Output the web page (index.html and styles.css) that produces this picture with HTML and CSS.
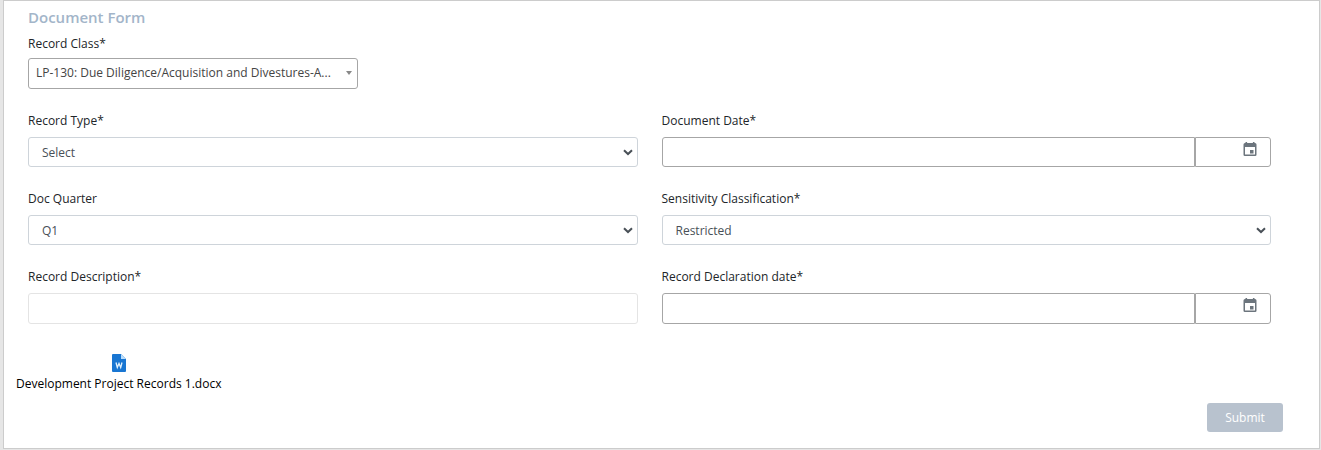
FILE: index.html
```html
<!DOCTYPE html>
<html lang="en">
<head>
<meta charset="utf-8">
<meta name="viewport" content="width=device-width, initial-scale=1">
<title>Document Form</title>
<link rel="stylesheet" href="styles.css">
</head>
<body>
<svg width="0" height="0" class="sprite" aria-hidden="true">
  <symbol id="chevron" viewBox="0 0 10 7"><path d="M1 1.2 5 5 9 1.2" fill="none" stroke="#495057" stroke-width="2"/></symbol>
  <symbol id="calendar" viewBox="0 0 14 15"><path fill="#6c757d" fill-rule="evenodd" d="M2.5 0h1.6v1h5.8V0h1.6v1h.5a1.5 1.5 0 0 1 1.5 1.500v10.200a1.300 1.300 0 0 1-1.300 1.300H1.800A1.300 1.300 0 0 1 .5 12.700V2.500A1.500 1.500 0 0 1 2 1h.5zM2 5v7.500h10V5zM7 8h3.500v3.500H7z"/></symbol>
</svg>
<form class="card">
  <h1 class="title">Document Form</h1>
  <div class="field record-class">
    <label for="class">Record Class*</label>
    <div class="picker">
      <select id="class" class="control control-dark"><option>LP-130: Due Diligence/Acquisition and Divestures-A...</option></select>
      <svg class="caret" viewBox="0 0 6 4" aria-hidden="true"><path d="M0 0h6L3 4z" fill="#888"/></svg>
    </div>
  </div>
  <div class="grid">
    <div class="field">
      <label for="type">Record Type*</label>
      <div class="picker">
        <select id="type" class="control control-select"><option>Select</option></select>
        <svg class="chevron" aria-hidden="true"><use href="#chevron"/></svg>
      </div>
    </div>
    <div class="field">
      <label for="date">Document Date*</label>
      <div class="date">
        <input id="date" class="control control-dark" type="text">
        <button type="button" class="date-button" aria-label="Choose document date"><svg class="calendar" aria-hidden="true"><use href="#calendar"/></svg></button>
      </div>
    </div>
    <div class="field">
      <label for="quarter">Doc Quarter</label>
      <div class="picker">
        <select id="quarter" class="control control-select"><option>Q1</option></select>
        <svg class="chevron" aria-hidden="true"><use href="#chevron"/></svg>
      </div>
    </div>
    <div class="field">
      <label for="sensitivity">Sensitivity Classification*</label>
      <div class="picker">
        <select id="sensitivity" class="control control-select"><option>Restricted</option></select>
        <svg class="chevron" aria-hidden="true"><use href="#chevron"/></svg>
      </div>
    </div>
    <div class="field">
      <label for="description">Record Description*</label>
      <input id="description" class="control control-light control-tall" type="text">
    </div>
    <div class="field">
      <label for="declaration">Record Declaration date*</label>
      <div class="date">
        <input id="declaration" class="control control-dark control-tall" type="text">
        <button type="button" class="date-button" aria-label="Choose declaration date"><svg class="calendar" aria-hidden="true"><use href="#calendar"/></svg></button>
      </div>
    </div>
  </div>
  <div class="file">
    <svg class="file-icon" viewBox="0 0 14 18" aria-hidden="true">
      <path d="M1 0h8l5 5v12a1 1 0 0 1-1 1H1a1 1 0 0 1-1-1V1a1 1 0 0 1 1-1z" fill="#1976d2"/>
      <path d="M9 0l5 5H9z" fill="#bbdefb"/>
      <path d="M4 8.500l1.300 5L7 9.500l1.700 4 1.300-5" fill="none" stroke="#e3f2fd" stroke-width="1.300"/>
    </svg>
    <span>Development Project Records 1.docx</span>
  </div>
  <div class="actions"><button type="submit" class="submit">Submit</button></div>
</form>
</body>
</html>
```
FILE: styles.css
```css
* { box-sizing: border-box; }
body {
  margin: 0;
  padding: 0 1px 1px 3px;
  background: #e6e6e6;
  color: #212529;
  font: 12px/20px "Open Sans", "Noto Sans", sans-serif;
}
.sprite { display: none; }
.card {
  margin: 0;
  padding: 6px 48px 16px 24px;
  background: #fff;
  border: 1px solid #ccc;
}
.title {
  margin: 0;
  color: #a3b5c9;
  font-size: 15px;
  line-height: 20px;
  font-weight: 600;
}
.field { display: flex; flex-direction: column; gap: 6px; min-width: 0; }
.record-class { gap: 4px; margin-top: 7px; width: 330px; }
.grid {
  display: grid;
  grid-template-columns: repeat(2, minmax(0, 1fr));
  gap: 22px 24px;
  margin-top: 22px;
}
.picker { position: relative; display: flex; }
.control {
  width: 100%;
  height: 30px;
  margin: 0;
  padding: 0 12px;
  appearance: none;
  background: #fff;
  border: 1px solid #ced4da;
  border-radius: 3px;
  color: #495057;
  font: inherit;
}
.control-select { padding: 2px 12px 0 13px; }
.control-dark { border-color: #a6a6a6; }
.control-light { border-color: #e4e4e4; }
.control-tall { height: 31px; }
.record-class .control { height: 31px; padding: 0 7px 2px; color: #444; }
.chevron { position: absolute; right: 5px; top: 12px; width: 10px; height: 7px; pointer-events: none; }
.caret { position: absolute; right: 6px; top: 13px; width: 6px; height: 4px; pointer-events: none; }
.date { display: flex; }
.date .control { flex: 1; min-width: 0; border-radius: 3px 0 0 3px; }
.date-button {
  display: flex;
  justify-content: flex-end;
  width: 76px;
  padding: 4px 13px 0 0;
  background: #fff;
  border: 1px solid #a6a6a6;
  border-radius: 0 3px 3px 0;
}
.calendar { width: 14px; height: 15px; }
.file {
  display: flex;
  flex-direction: column;
  align-items: center;
  gap: 2px;
  width: max-content;
  margin: 30px 0 0 -12px;
  color: #000;
}
.file-icon { width: 14px; height: 18px; }
.actions { display: flex; justify-content: flex-end; margin: 9px -12px 0 0; }
.submit {
  width: 76px;
  height: 29px;
  padding: 0;
  background: #b8c2ce;
  border: 0;
  border-radius: 3px;
  color: #fff;
  font: inherit;
}
```
